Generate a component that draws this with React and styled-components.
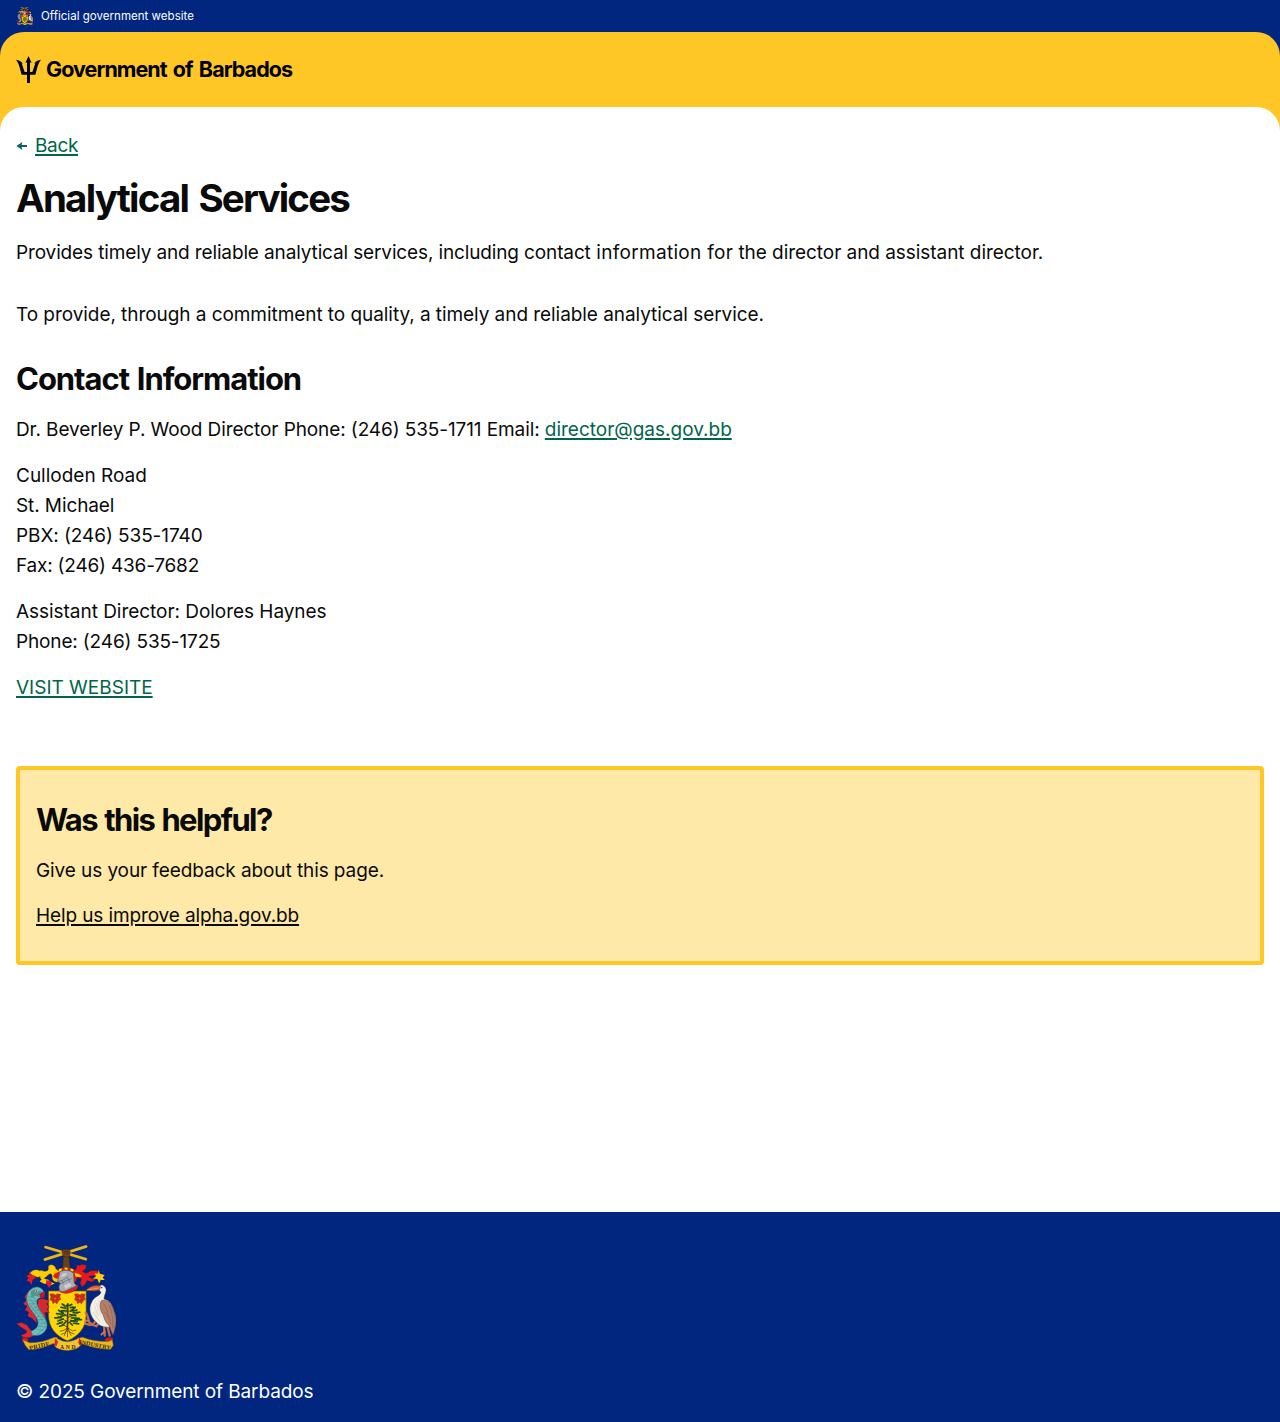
import React from "react";
import styled, { createGlobalStyle } from "styled-components";

const blue = "#00267f";
const yellow = "#ffc726";
const green = "#00654a";
const ink = "#0a0a0a";

const GlobalStyle = createGlobalStyle`
  *, *::before, *::after { box-sizing: border-box; }
  body {
    margin: 0;
    background: #fff;
    color: ${ink};
    font: 400 19px/30px Inter, "Liberation Sans", sans-serif;
  }
  h1, h2, p { margin: 0; }
  svg { display: block; flex: none; }
`;

const Page = styled.div`
  min-height: 1422px;
  display: flex;
  flex-direction: column;
`;

const OfficialBar = styled.div`
  height: 32px;
  padding: 0 16px;
  display: flex;
  align-items: center;
  gap: 8px;
  background: ${blue};
  color: #fff;
  font-size: 11.5px;
  line-height: 16px;
  letter-spacing: 0.03px;
`;

const Backdrop = styled.div`
  background: ${(p) => p.$color};
`;

const Header = styled.header`
  height: 75px;
  padding: 0 16px;
  display: flex;
  align-items: center;
  background: ${yellow};
  border-radius: 24px 24px 0 0;
`;

const Brand = styled.div`
  display: flex;
  align-items: center;
  gap: 5px;
  color: #000;
`;

const BrandName = styled.span`
  padding-bottom: 2px;
  font-size: 21.5px;
  font-weight: 700;
  letter-spacing: -0.95px;
  word-spacing: 2px;
`;

const Main = styled.main`
  padding: 24px 16px 0;
  display: flex;
  flex-direction: column;
  background: #fff;
  border-radius: 24px 24px 0 0;
`;

const BackRow = styled.div`
  display: flex;
  align-items: center;
  gap: 8px;
`;

const Link = styled.a`
  color: ${(p) => p.$color || green};
  letter-spacing: ${(p) => p.$track || 0}px;
  text-decoration: underline;
  text-decoration-thickness: 2px;
  text-underline-offset: 2px;
`;

const Title = styled.h1`
  margin-top: 14px;
  font-size: 38.5px;
  line-height: 46px;
  font-weight: 700;
  letter-spacing: -1.8px;
  word-spacing: 3px;
`;

const Heading = styled.h2`
  margin-bottom: 3px;
  font-size: 31px;
  line-height: 35px;
  font-weight: 700;
  letter-spacing: ${(p) => p.$track}px;
  word-spacing: 1.5px;
`;

const Text = styled.p`
  letter-spacing: ${(p) => p.$track || 0}px;
`;

const Line = styled.span`
  display: block;
  letter-spacing: ${(p) => p.$track || 0}px;
`;

const Phrase = styled.span`
  letter-spacing: ${(p) => p.$track}px;
`;

const Intro = styled.div`
  margin: 16px 0 31px;
  display: flex;
  flex-direction: column;
  gap: 32px;
  padding-top: 1px;
`;

const Section = styled.section`
  display: flex;
  flex-direction: column;
  gap: 16px;
`;

const Feedback = styled.section`
  margin-top: 63px;
  padding: 32px 16px 30px;
  display: flex;
  flex-direction: column;
  gap: 15.5px;
  background: #ffe9a8;
  border: 4px solid ${yellow};
  border-radius: 4px;
`;

const Footer = styled.footer`
  height: 210px;
  margin-top: auto;
  padding: 32px 16px 15px;
  display: flex;
  flex-direction: column;
  gap: 25px;
  background: ${blue};
  color: #fff;
`;

function Trident() {
  return (
    <svg width="25" height="27" viewBox="48 168 75 81" fill="#000" aria-hidden="true">
      <path d="M85.5 168 L95 189 L90 187 V216 H97 C101 206 104 196 106 190 L102 191 C107 184 114 180 123 179 C117 186 113 196 111 206 L106 224 H90 V249 H81 V224 H65 L60 206 C58 196 54 186 48 179 C57 180 64 184 69 191 L65 190 C67 196 70 206 74 216 H81 V187 L76 189 Z" />
    </svg>
  );
}

function BackArrow() {
  return (
    <svg width="11" height="10" viewBox="0 0 11 10" fill="#0e5f64" aria-hidden="true">
      <path d="M0.4 5 L6.4 1 L5.6 4 H11 V6 H5.6 L6.4 9 Z" />
    </svg>
  );
}

function Hibiscus({ x, y }) {
  return (
    <g transform={`translate(${x} ${y})`} stroke="#7c1c10" strokeWidth="1">
      <path d="M-16 -14 L-6 -15 L0 -11 L7 -15 L16 -13 L14 -5 L17 2 L10 7 L5 16 L0 11 L-7 15 L-9 7 L-16 3 L-13 -5 Z" fill="#d9301f" />
      <path d="M-13 -10 L-5 -5 L0 -10 M13 -10 L5 -3 L0 -9 M-11 2 L-3 2 L-5 11 M11 2 L3 3 L4 11 M-7 -12 L-8 -4 M8 -12 L10 -4" fill="none" />
      <circle r="3" fill="#f09a2a" />
    </g>
  );
}

function CoatOfArms({ width, height, motto }) {
  return (
    <svg width={width} height={height} viewBox="49 44 301 320" strokeLinejoin="round" role="img" aria-label="Barbados coat of arms">
      {/* crest: raised fist holding crossed canes */}
      <path d="M189 118 L191 78 L187 68 L191 60 H208 L212 68 L209 80 L213 118 Z" fill="#65401f" stroke="#2d1b10" strokeWidth="2" />
      <g fill="none" strokeLinecap="round">
        <path d="M138 51 L259 87 M136 88 L260 49" stroke="#6c531a" strokeWidth="9.5" />
        <path d="M138 51 L259 87 M136 88 L260 49" stroke="#e8b824" strokeWidth="7.5" />
      </g>
      <path d="M187 65 L192 57 H207 L213 65 L210 77 L201 82 L191 77 Z" fill="#70451f" stroke="#2d1b10" strokeWidth="1.5" />
      <path d="M193 65 H208 M196 60 V74 M202 59 V75 M206 62 V74" stroke="#321e10" fill="none" />

      {/* mantling, left side */}
      <path d="M148 106 C158 101 168 107 169 117 C175 121 180 125 186 124 L184 148 C177 158 166 158 160 150 C156 142 160 134 154 131 C146 131 143 139 134 144 C129 147 125 141 121 139 C112 145 108 137 101 138 L91 129 C99 120 110 116 119 122 C130 119 133 127 143 122 C150 118 144 112 148 106 Z" fill="#ffce00" stroke="#815900" strokeWidth="1" />
      <path d="M120 141 C130 138 135 149 146 148 C151 157 158 157 166 160 L152 166 L143 160 C134 164 129 157 120 154 L126 148 Z" fill="#ffce00" />
      <path d="M89 120 L91 132 L104 137 L109 144 L99 149 L96 165 L89 154 L80 152 L87 144 L80 138 L88 134 Z" fill="#e6191b" />
      <path d="M139 151 L151 151 L157 160 L149 174 L140 161 Z M166 130 L178 125 L186 132 L181 144 L170 146 L160 139 Z" fill="#e6191b" />
      {/* mantling, right side */}
      <path d="M218 124 L232 115 L232 104 L240 107 L247 103 L260 105 L259 115 L249 124 L260 130 L275 122 L292 122 L302 130 L296 141 L279 136 L267 139 L276 145 L289 147 L278 156 L263 151 L257 163 L247 170 L242 158 L247 146 L233 142 L228 156 L218 159 L213 146 Z" fill="#e3191b" stroke="#871113" strokeWidth="1" />
      <path d="M298 118 L301 131 L316 135 L310 142 L316 150 L304 150 L299 160 L294 147 L281 145 L291 138 L285 130 L296 130 Z" fill="#ffc80b" />
      <path d="M225 128 L236 131 L248 138 L241 141 L228 139 Z" fill="#ffd000" />
      <path d="M178 121 Q200 110 222 122" fill="none" stroke="#e3191b" strokeWidth="7" />
      <path d="M178 121 Q200 110 222 122" fill="none" stroke="#ffd000" strokeWidth="7" strokeDasharray="9 9" />

      {/* shield */}
      <path d="M147 183 H260 V255 C260 294 237 318 204 333 C170 318 147 294 147 255 Z" fill="#ffd507" stroke="#76610a" strokeWidth="2" />

      {/* helmet */}
      <path d="M176 179 L218 166 L235 165 Q237 177 226 181 C217 190 198 193 183 187 Z" fill="#df2020" stroke="#771a17" strokeWidth="1" />
      <path d="M181 126 C191 117 214 119 222 130 L224 158 L231 167 L220 173 C209 174 202 187 181 184 L178 171 L182 159 L174 153 Z" fill="#a9adb0" stroke="#50565b" strokeWidth="2" />
      <path d="M175 154 L189 151 L207 139 M181 162 L202 151 L218 145 M188 152 L191 163 M204 143 L211 157" fill="none" stroke="#62686e" strokeWidth="2" />
      <path d="M189 131 L203 128 L198 137 L184 143 Z M193 166 L211 158 L217 166 L198 177 Z" fill="#cdd0d2" />
      <Hibiscus x={167} y={206} />
      <Hibiscus x={241} y={206} />

      {/* bearded fig tree */}
      <g fill="none" stroke="#49370e" strokeLinecap="round">
        <path d="M204 297 L205 223" strokeWidth="5" />
        <path d="M204 292 L180 278 M204 276 L174 258 M204 260 L178 242 M205 280 L234 266 M205 263 L236 249 M205 247 L228 231 M205 240 L190 225" strokeWidth="2.5" />
        <path d="M204 294 L198 308 L185 314 M204 294 L192 302 L182 304 M204 294 L211 307 L223 312 M204 294 L219 303 L229 301 M204 295 V321 M201 301 L194 318 M207 302 L215 317" strokeWidth="2" />
      </g>
      <g fill="none" stroke="#194e24" strokeWidth="5" strokeLinecap="round">
        <path d="M205 222 L200 230 M209 227 L217 223 M213 233 L222 231 M196 227 L188 222 M198 235 L184 232 M201 243 L187 242 M219 239 L227 232 M214 244 L232 240 M221 248 L241 247 M192 250 L177 241 M189 253 L171 251 M199 255 L182 260 M211 254 L229 257 M184 263 L166 264 M191 267 L175 273 M217 264 L239 265 M214 272 L233 275 M226 270 L246 269 M189 276 L173 282 M200 274 L190 286 M210 277 L219 286 M223 280 L238 282 M190 286 L180 289" />
      </g>
      <g fill="none" stroke="#4e7420" strokeWidth="1.5" strokeLinecap="round">
        <path d="M190 228 L196 239 M217 228 L211 242 M180 247 L196 258 M230 246 L212 263 M174 269 L190 281 M235 271 L213 283 M203 232 L198 248 M225 252 L211 270" />
      </g>

      {/* dolphin supporter */}
      <path d="M116 208 L131 206 L149 212 L141 223 L150 230 L142 238 L150 248 L135 247 L139 263 L124 253 L112 236 Z" fill="#d72830" stroke="#761c22" strokeWidth="1" />
      <path d="M103 171 L86 184 L75 201 L80 210 L71 222 L83 229 L76 240 L88 247 L84 258 L98 266 L112 280 L104 230 Z" fill="#d72830" />
      <path d="M50 281 L66 278 L82 285 L94 302 L113 309 L98 319 C86 326 73 326 63 317 L79 310 L82 303 L64 292 Z" fill="#df2934" stroke="#661c2b" strokeWidth="1.5" />
      <path d="M102 173 C82 181 76 205 86 226 C94 244 112 257 115 276 C117 290 108 298 94 304 L98 316 C124 322 147 303 142 279 C138 257 119 244 114 227 C109 213 112 205 124 203 C118 196 122 190 134 190 C131 174 115 167 102 173 Z" fill="#6fbdba" stroke="#315e67" strokeWidth="1.5" />
      <g fill="none" stroke="#347783" strokeWidth="1">
        <path d="M85 199 L107 205 M84 210 L108 214 M87 221 L111 222 M91 231 L114 232 M98 240 L119 240 M105 249 L127 250 M111 259 L134 260 M115 269 L139 269 M116 279 L141 280 M114 288 L141 291 M107 297 L135 302 M94 190 L111 214 M88 203 L135 266 M88 222 L141 286 M113 211 L90 230 M114 225 L97 240 M120 236 L105 250 M128 247 L112 262 M136 259 L116 276 M141 272 L115 293 M140 287 L112 315" />
      </g>
      <path d="M94 184 L107 177 L120 184 L132 185 L136 193 L121 193 L120 201 L108 197 L94 204 Z" fill="#549393" />
      <circle cx="111" cy="183" r="4" fill="#f4da65" />
      <circle cx="111" cy="183" r="2" fill="#18242a" />
      <path d="M119 192 L136 184 L135 202 L124 205 Z" fill="#be1727" />

      {/* pelican supporter */}
      <path d="M287 275 L281 284 L270 278 L264 258 L259 248 M298 279 L291 289 L280 285 L270 285 L260 282 M314 285 L316 317 M323 286 L331 317" fill="none" stroke="#c36b49" strokeWidth="7" strokeLinecap="round" />
      <path d="M268 275 L258 270 L256 284 M317 304 L304 316" fill="none" stroke="#d47d55" strokeWidth="5" />
      <path d="M300 168 C308 161 317 168 320 178 C321 188 313 198 314 207 C331 211 340 225 345 246 C354 270 350 289 340 313 L331 291 C315 294 298 287 291 277 C276 265 264 240 277 216 C284 200 297 199 303 191 C307 185 300 182 296 177 Z" fill="#f2efe4" stroke="#544c48" strokeWidth="1.5" />
      <path d="M306 212 C323 206 336 221 341 236 C351 263 351 288 341 316 L329 287 C319 279 314 266 311 254 C302 241 299 225 306 212 Z" fill="#b47e67" stroke="#563b37" strokeWidth="1.5" />
      <path d="M309 218 C321 228 326 244 326 260 M315 247 C329 256 331 269 334 284 M329 225 C340 250 341 270 340 296" fill="none" stroke="#7d574c" strokeWidth="1.5" />
      <path d="M303 168 C287 164 275 168 260 180 C276 184 292 183 301 179 Z" fill="#e56335" stroke="#813821" strokeWidth="1.5" />
      <path d="M262 180 L298 174" stroke="#ffb44b" strokeWidth="2" />
      <circle cx="307" cy="173" r="2" fill="#171717" />
      <path d="M286 228 L296 258 M290 219 L305 258 M281 246 L302 276 M299 211 L300 231" stroke="#c9c7bd" strokeWidth="1.5" />

      {/* motto ribbon */}
      <path d="M68 325 L79 322 L87 330 L80 341 L68 336 Z M340 324 L325 323 L315 330 L325 341 L339 337 Z" fill="#d71920" stroke="#851a18" strokeWidth="1" />
      <path d="M69 330 L91 339 Q129 339 164 322 L174 323 L172 346 L162 341 Q126 358 88 360 L77 347 Z" fill="#e9b721" stroke="#825e12" strokeWidth="1.5" />
      <path d="M339 330 L327 335 Q284 336 250 322 L235 325 L236 346 L246 341 Q286 357 333 359 L342 346 Z" fill="#e9b721" stroke="#825e12" strokeWidth="1.5" />
      <path d="M173 326 Q205 346 238 324 L244 344 Q239 359 204 362 Q173 361 165 348 Z" fill="#f3c330" stroke="#825e12" strokeWidth="1.5" />
      <path d="M166 325 L176 335 L171 349 L165 347 Z M240 324 L236 338 L243 349 L248 342 Z" fill="#dc2420" />
      {motto && (
        <g fill="#47320b" fontFamily="Liberation Serif, serif" fontWeight="700" textAnchor="middle">
          <text transform="translate(121 354) rotate(-13)" fontSize="19" textLength="63">PRIDE</text>
          <text x="205" y="358" fontSize="17" textLength="47">AND</text>
          <text transform="translate(286 351) rotate(11)" fontSize="18" textLength="96" lengthAdjust="spacingAndGlyphs">INDUSTRY</text>
        </g>
      )}
    </svg>
  );
}

export default function App() {
  return (
    <Page>
      <GlobalStyle />
      <OfficialBar>
        <CoatOfArms width={17} height={18} />
        <span>Official government website</span>
      </OfficialBar>
      <Backdrop $color={blue}>
        <Header>
          <Brand>
            <Trident />
            <BrandName>Government of Barbados</BrandName>
          </Brand>
        </Header>
      </Backdrop>
      <Backdrop $color={yellow}>
        <Main>
          <BackRow>
            <BackArrow />
            <Link href="#" $track={-0.35}>Back</Link>
          </BackRow>
          <Title>Analytical Services</Title>
          <Intro>
            <Text $track={-0.05}>
              <Phrase $track={-0.135}>Provides timely and reliable analytical services, including contact</Phrase>
              <Phrase $track={0.3}> information for</Phrase> the director and assistant director.
            </Text>
            <Text $track={-0.06}>
              To provide, through a commitment to quality, a timely and reliable analytical service.
            </Text>
          </Intro>
          <Section>
            <Heading $track={-1.05}>Contact Information</Heading>
            <Text $track={-0.1}>
              Dr. Beverley P. Wood Director Phone: (246) 535-1711 Email: <Link href="#">director@gas.gov.bb</Link>
            </Text>
            <Text>
              <Line>Culloden Road</Line>
              <Line $track={-0.1}>St. Michael</Line>
              <Line $track={-0.08}>PBX: (246) 535-1740</Line>
              <Line $track={-0.2}>Fax: (246) 436-7682</Line>
            </Text>
            <Text>
              <Line $track={-0.04}>Assistant Director: Dolores Haynes</Line>
              <Line $track={-0.15}>Phone: (246) 535-1725</Line>
            </Text>
            <Text>
              <Link href="#">VISIT WEBSITE</Link>
            </Text>
          </Section>
          <Feedback>
            <Heading $track={-1.61}>Was this helpful?</Heading>
            <Text $track={-0.09}>Give us your feedback about this page.</Text>
            <Text>
              <Link href="#" $color={ink} $track={-0.12}>Help us improve alpha.gov.bb</Link>
            </Text>
          </Feedback>
        </Main>
      </Backdrop>
      <Footer>
        <CoatOfArms width={100} height={108} motto />
        <Text $track={-0.1}>© 2025 Government of Barbados</Text>
      </Footer>
    </Page>
  );
}
